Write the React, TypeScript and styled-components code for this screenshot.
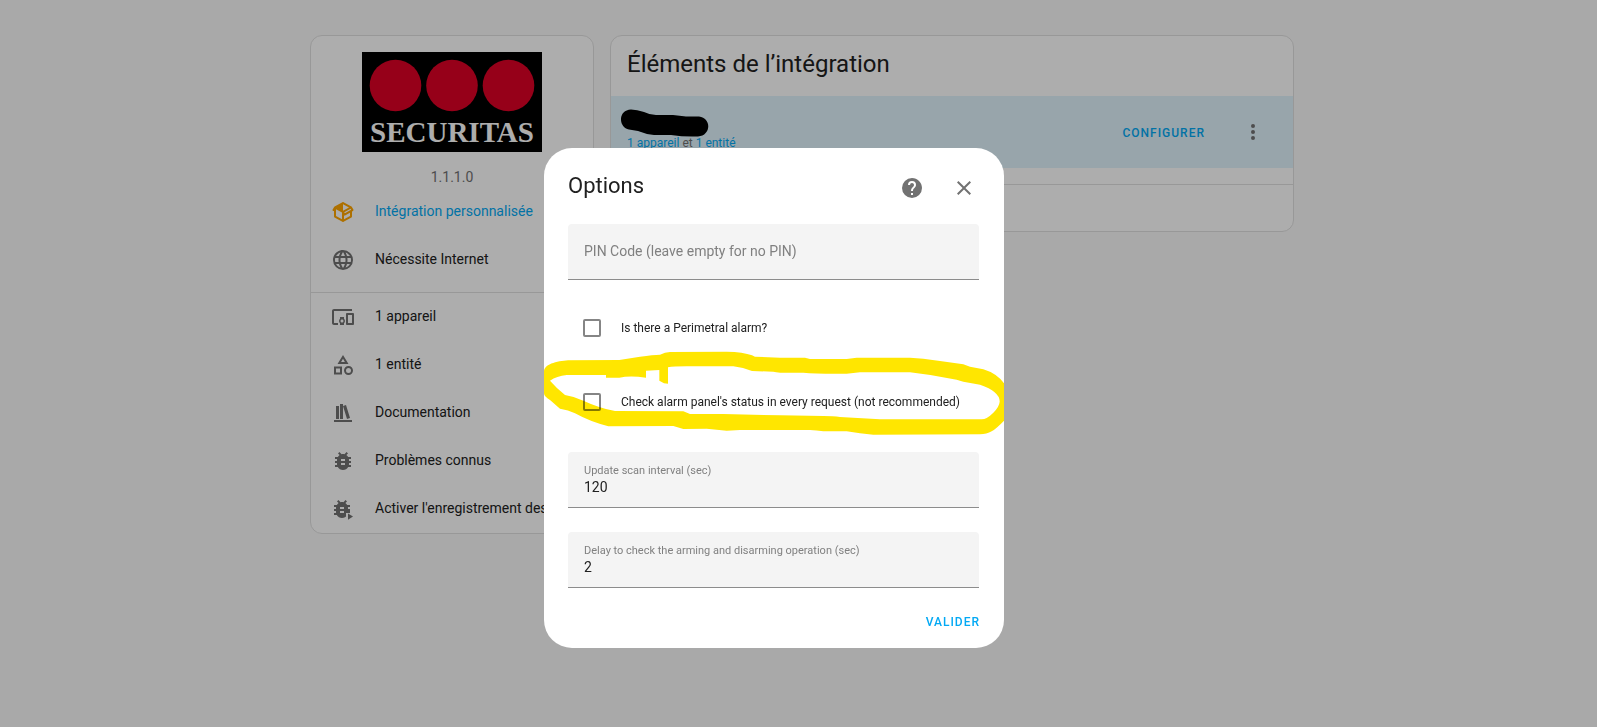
import React from "react";
import styled, { createGlobalStyle } from "styled-components";

const GlobalStyle = createGlobalStyle`
  *, *::before, *::after { box-sizing: border-box; }
  body {
    margin: 0;
    background: #fafafa;
    color: #212121;
    font: 400 14px/20px Roboto, sans-serif;
  }
  h1, h2, p, ul { margin: 0; padding: 0; font-weight: 400; }
  a { color: #03a9f4; text-decoration: none; }
  button { font: inherit; border: 0; background: none; cursor: pointer; }
`;

const icons = {
  package:
    "M2,10.96C1.5,10.68 1.35,10.07 1.63,9.59L3.13,7C3.24,6.8 3.41,6.66 3.6,6.58L11.43,2.18C11.59,2.06 11.79,2 12,2C12.21,2 12.41,2.06 12.57,2.18L20.47,6.62C20.66,6.72 20.82,6.88 20.91,7.08L22.36,9.6C22.64,10.08 22.47,10.69 22,10.96L21,11.54V16.5C21,16.88 20.79,17.21 20.47,17.38L12.57,21.82C12.41,21.94 12.21,22 12,22C11.79,22 11.59,21.94 11.43,21.82L3.53,17.38C3.21,17.21 3,16.88 3,16.5V10.96C2.7,11.13 2.32,11.14 2,10.96M12,4.15V4.15L12,10.85V10.85L17.96,7.5L12,4.15M5,15.91L11,19.29V12.58L5,9.21V15.91M19,15.91V12.69L14,15.59C13.67,15.77 13.3,15.76 13,15.6V19.29L19,15.91M13.85,13.36L20.13,9.73L19.55,8.72L13.27,12.35L13.85,13.36Z",
  web: "M16.36,14C16.44,13.34 16.5,12.68 16.5,12C16.5,11.32 16.44,10.66 16.36,10H19.74C19.9,10.64 20,11.31 20,12C20,12.69 19.9,13.36 19.74,14M14.59,19.56C15.19,18.45 15.65,17.25 15.97,16H18.92C17.96,17.65 16.43,18.93 14.59,19.56M14.34,14H9.66C9.56,13.34 9.5,12.68 9.5,12C9.5,11.32 9.56,10.65 9.66,10H14.34C14.43,10.65 14.5,11.32 14.5,12C14.5,12.68 14.43,13.34 14.34,14M12,19.96C11.17,18.76 10.5,17.43 10.09,16H13.91C13.5,17.43 12.83,18.76 12,19.96M8,8H5.08C6.03,6.34 7.57,5.06 9.4,4.44C8.8,5.55 8.35,6.75 8,8M5.08,16H8C8.35,17.25 8.8,18.45 9.4,19.56C7.57,18.93 6.03,17.65 5.08,16M4.26,14C4.1,13.36 4,12.69 4,12C4,11.31 4.1,10.64 4.26,10H7.64C7.56,10.66 7.5,11.32 7.5,12C7.5,12.68 7.56,13.34 7.64,14M12,4.03C12.83,5.23 13.5,6.57 13.91,8H10.09C10.5,6.57 11.17,5.23 12,4.03M18.92,8H15.97C15.65,6.75 15.19,5.55 14.59,4.44C16.43,5.07 17.96,6.34 18.92,8M12,2C6.47,2 2,6.5 2,12A10,10 0 0,0 12,22A10,10 0 0,0 22,12A10,10 0 0,0 12,2Z",
  devices:
    "M3 6H21V4H3C1.9 4 1 4.9 1 6V18C1 19.1 1.9 20 3 20H7V18H3V6M13 12H9V13.78C8.39 14.33 8 15.11 8 16C8 16.89 8.39 17.67 9 18.22V20H13V18.22C13.61 17.67 14 16.88 14 16S13.61 14.33 13 13.78V12M11 17.5C10.17 17.5 9.5 16.83 9.5 16S10.17 14.5 11 14.5 12.5 15.17 12.5 16 11.83 17.5 11 17.5M22 8H16C15.5 8 15 8.5 15 9V19C15 19.5 15.5 20 16 20H22C22.5 20 23 19.5 23 19V9C23 8.5 22.5 8 22 8M21 18H17V10H21V18Z",
  shape:
    "M11,13.5V21.5H3V13.5H11M9,15.5H5V19.5H9V15.5M12,2L17.5,11H6.5L12,2M12,5.86L10.08,9H13.92L12,5.86M17.5,13C20,13 22,15 22,17.5C22,20 20,22 17.5,22C15,22 13,20 13,17.5C13,15 15,13 17.5,13M17.5,15A2.5,2.5 0 0,0 15,17.5A2.5,2.5 0 0,0 17.5,20A2.5,2.5 0 0,0 20,17.5A2.5,2.5 0 0,0 17.5,15Z",
  bookshelf: "M9 3V18H12V3H9M12 5L16 18L19 17L15 4L12 5M5 5V18H8V5H5M3 19V21H21V19H3Z",
  bug: "M14,12H10V10H14M14,16H10V14H14M20,8H17.19C16.74,7.22 16.12,6.55 15.37,6.04L17,4.41L15.59,3L13.42,5.17C12.96,5.06 12.5,5 12,5C11.5,5 11.04,5.06 10.59,5.17L8.41,3L7,4.41L8.62,6.04C7.88,6.55 7.26,7.22 6.81,8H4V10H6.09C6.04,10.33 6,10.66 6,11V12H4V14H6V15C6,15.34 6.04,15.67 6.09,16H4V18H6.81C7.85,19.79 9.78,21 12,21C14.22,21 16.15,19.79 17.19,18H20V16H17.91C17.96,15.67 18,15.34 18,15V14H20V12H18V11C18,10.66 17.96,10.33 17.91,10H20V8Z",
  dots: "M12,16A2,2 0 0,1 14,18A2,2 0 0,1 12,20A2,2 0 0,1 10,18A2,2 0 0,1 12,16M12,10A2,2 0 0,1 14,12A2,2 0 0,1 12,14A2,2 0 0,1 10,12A2,2 0 0,1 12,10M12,4A2,2 0 0,1 14,6A2,2 0 0,1 12,8A2,2 0 0,1 10,6A2,2 0 0,1 12,4Z",
  help: "M15.07,11.25L14.17,12.17C13.45,12.89 13,13.5 13,15H11V14.5C11,13.39 11.45,12.39 12.17,11.67L13.41,10.41C13.78,10.05 14,9.55 14,9C14,7.89 13.1,7 12,7A2,2 0 0,0 10,9H8A4,4 0 0,1 12,5A4,4 0 0,1 16,9C16,9.88 15.64,10.67 15.07,11.25M13,19H11V17H13M12,2A10,10 0 0,0 2,12A10,10 0 0,0 12,22A10,10 0 0,0 22,12C22,6.47 17.5,2 12,2Z",
  close:
    "M19,6.41L17.59,5L12,10.59L6.41,5L5,6.41L10.59,12L5,17.59L6.41,19L12,13.41L17.59,19L19,17.59L13.41,12L19,6.41Z",
};

const Svg = styled.svg<{ $color?: string }>`
  display: block;
  flex: none;
  width: 24px;
  height: 24px;
  fill: ${(p) => p.$color ?? "#727272"};
`;

const Icon = ({ name, color }: { name: keyof typeof icons; color?: string }) => (
  <Svg viewBox="0 0 24 24" $color={color} aria-hidden="true">
    <path d={icons[name]} />
  </Svg>
);

const BugPlayIcon = () => (
  <Svg viewBox="0 0 24 24" aria-hidden="true">
    <path d={icons.bug} transform="translate(-1 0)" />
    <path d="M15 14V24H24V14Z" fill="#fff" />
    <path d="M15 14H19V16H15Z" />
    <path d="M17 16.5V22.8L22 19.6Z" />
  </Svg>
);

const Page = styled.main`
  display: flex;
  align-items: flex-start;
  gap: 16px;
  max-width: 984px;
  margin: 0 auto;
  padding: 35px 0;
`;

const PageFrame = styled.div`
  padding-left: 7px;
`;

const Card = styled.section<{ $grow?: boolean }>`
  flex: ${(p) => (p.$grow ? "1" : "0 0 284px")};
  min-width: 0;
  overflow: hidden;
  background: #fff;
  border: 1px solid #e0e0e0;
  border-radius: 12px;
`;

const Brand = styled.div`
  display: flex;
  flex-direction: column;
  align-items: center;
  gap: 15px;
  padding: 16px 0 1px;
  color: #727272;
`;

const Logo = styled.svg`
  display: block;
  width: 180px;
  height: 100px;
`;

const InfoList = styled.ul<{ $divided?: boolean }>`
  list-style: none;
  padding: ${(p) => (p.$divided ? "0 0 8px" : "0")};
  border-bottom: ${(p) => (p.$divided ? "1px solid #e0e0e0" : "0")};
`;

const InfoItem = styled.li`
  display: flex;
  align-items: center;
  gap: 20px;
  height: 48px;
  padding: 0 20px;
  white-space: nowrap;
`;

const InfoLink = styled.a<{ $plain?: boolean }>`
  padding-bottom: 2px;
  color: ${(p) => (p.$plain ? "#212121" : "#03a9f4")};
`;

const InfoText = styled.span`
  padding-bottom: 2px;
`;

const CardTitle = styled.h1`
  padding: 12px 16px 16px;
  font-size: 24px;
  line-height: 32px;
`;

const Entry = styled.div`
  display: flex;
  align-items: center;
  height: 72px;
  padding: 0 16px;
  background: #e0f3fc;
`;

const EntryText = styled.div`
  flex: 1;
  padding-top: 2px;
  font-size: 12px;
  color: #727272;
`;

const EntryName = styled.div`
  position: relative;
  height: 20px;
`;

const Redaction = styled.svg`
  position: absolute;
  left: -6px;
  top: -4px;
  width: 88px;
  height: 28px;
`;

const TextButton = styled.button`
  padding: 9px 8px 7px;
  font-size: 12px;
  line-height: 20px;
  font-weight: 500;
  letter-spacing: 1px;
  text-transform: uppercase;
  color: #03a9f4;
`;

const IconButton = styled.button`
  display: grid;
  place-items: center;
  width: 48px;
  height: 48px;
  padding: 0;
`;

const EntryActions = styled.div`
  display: flex;
  align-items: center;
  gap: 16px;
`;

const CardFooter = styled.div`
  height: 47px;
  margin-top: 16px;
  border-top: 1px solid #e0e0e0;
`;

const Scrim = styled.div`
  position: fixed;
  inset: 0;
  display: flex;
  align-items: center;
  justify-content: center;
  padding: 69px 49px 0 0;
  background: rgba(0, 0, 0, 0.32);
`;

const Dialog = styled.form`
  position: relative;
  width: 460px;
  max-width: 100%;
  background: #fff;
  border-radius: 28px;
`;

const DialogHeader = styled.header`
  display: flex;
  gap: 4px;
  padding: 16px 16px 12px 24px;
`;

const DialogTitle = styled.h2`
  flex: 1;
  font-size: 22px;
  line-height: 44px;
`;

const Fields = styled.div`
  display: flex;
  flex-direction: column;
  gap: 24px;
  padding: 0 25px 0 24px;
`;

const FieldBox = styled.div`
  display: flex;
  flex-direction: column;
  justify-content: center;
  height: 56px;
  padding: 0 16px 2px;
  background: #f4f4f4;
  border-bottom: 1px solid #8c8c8c;
  border-radius: 4px 4px 0 0;
`;

const FieldLabel = styled.label`
  font-size: 11px;
  line-height: 16px;
  color: #808080;
`;

const FieldInput = styled.input`
  width: 100%;
  height: 16px;
  padding: 0;
  border: 0;
  outline: 0;
  background: none;
  color: #212121;
  font: 400 14px/16px Roboto, sans-serif;

  &::placeholder {
    color: #808080;
    opacity: 1;
  }
`;

const CheckRow = styled.label`
  display: flex;
  align-items: center;
  gap: 20px;
  height: 50px;
  padding: 0 0 2px 15px;
  font-size: 12px;
  white-space: nowrap;
`;

const CheckInput = styled.input`
  appearance: none;
  flex: none;
  width: 18px;
  height: 18px;
  margin: 0;
  border: 2px solid #858585;
  border-radius: 2px;

  &:checked {
    background: #03a9f4;
  }
`;

const DialogActions = styled.footer`
  display: flex;
  justify-content: flex-end;
  padding: 15px 16px 9px;
`;

const Marker = styled.svg`
  position: absolute;
  left: 0;
  top: 202px;
  width: 100%;
  height: 90px;
  mix-blend-mode: multiply;
  pointer-events: none;
`;

const TextField = ({ id, label, value }: { id: string; label: string; value: string }) => (
  <FieldBox>
    <FieldLabel htmlFor={id}>{label}</FieldLabel>
    <FieldInput id={id} defaultValue={value} />
  </FieldBox>
);

export default function App() {
  return (
    <>
      <GlobalStyle />
      <PageFrame>
        <Page>
          <Card>
            <Brand>
              <Logo viewBox="0 0 180 100" role="img" aria-label="Securitas">
                <rect width="180" height="100" fill="#000" />
                <g fill="#de0026">
                  <circle cx="33.5" cy="33.5" r="25.8" />
                  <circle cx="90" cy="33.5" r="25.8" />
                  <circle cx="146.5" cy="33.5" r="25.8" />
                </g>
                <text
                  x="90"
                  y="90"
                  textAnchor="middle"
                  fill="#fff"
                  fontFamily="'Liberation Serif', serif"
                  fontWeight="700"
                  fontSize="29"
                >
                  SECURITAS
                </text>
              </Logo>
              <p>1.1.1.0</p>
            </Brand>
            <InfoList $divided>
              <InfoItem>
                <Icon name="package" color="#ffa600" />
                <InfoLink href="#">Intégration personnalisée</InfoLink>
              </InfoItem>
              <InfoItem>
                <Icon name="web" />
                <InfoText>Nécessite Internet</InfoText>
              </InfoItem>
            </InfoList>
            <InfoList>
              <InfoItem>
                <Icon name="devices" />
                <InfoLink href="#" $plain>1 appareil</InfoLink>
              </InfoItem>
              <InfoItem>
                <Icon name="shape" />
                <InfoLink href="#" $plain>1 entité</InfoLink>
              </InfoItem>
              <InfoItem>
                <Icon name="bookshelf" />
                <InfoLink href="#" $plain>Documentation</InfoLink>
              </InfoItem>
              <InfoItem>
                <Icon name="bug" />
                <InfoLink href="#" $plain>Problèmes connus</InfoLink>
              </InfoItem>
              <InfoItem>
                <BugPlayIcon />
                <InfoLink href="#" $plain>Activer l'enregistrement des</InfoLink>
              </InfoItem>
            </InfoList>
          </Card>

          <Card $grow>
            <CardTitle>Éléments de l’intégration</CardTitle>
            <Entry>
              <EntryText>
                <EntryName>
                  <Redaction viewBox="0 0 88 28" aria-hidden="true">
                    <path d="M10 .5Q16 .5 23 3Q29 6 35 6L52 6L65 7.5L78 7.5C91 9 90 27 77 27.5Q63 28 50 26L33 26Q24 25 17 22L8 20.5C-3 18-3 1 10 .5Z" />
                  </Redaction>
                </EntryName>
                <div>
                  <a href="#">1 appareil</a> et <a href="#">1 entité</a>
                </div>
              </EntryText>
              <EntryActions>
                <TextButton type="button">Configurer</TextButton>
                <IconButton type="button" aria-label="Menu">
                  <Icon name="dots" />
                </IconButton>
              </EntryActions>
            </Entry>
            <CardFooter />
          </Card>
        </Page>
      </PageFrame>

      <Scrim>
        <Dialog role="dialog" aria-labelledby="dialog-title" onSubmit={(e) => e.preventDefault()}>
          <DialogHeader>
            <DialogTitle id="dialog-title">Options</DialogTitle>
            <IconButton type="button" aria-label="Aide">
              <Icon name="help" />
            </IconButton>
            <IconButton type="button" aria-label="Fermer">
              <Icon name="close" />
            </IconButton>
          </DialogHeader>
          <Fields>
            <FieldBox>
              <FieldInput
                aria-label="PIN Code (leave empty for no PIN)"
                placeholder="PIN Code (leave empty for no PIN)"
              />
            </FieldBox>
            <CheckRow>
              <CheckInput type="checkbox" />
              Is there a Perimetral alarm?
            </CheckRow>
            <CheckRow>
              <CheckInput type="checkbox" />
              Check alarm panel's status in every request (not recommended)
            </CheckRow>
            <TextField id="scan" label="Update scan interval (sec)" value="120" />
            <TextField id="delay" label="Delay to check the arming and disarming operation (sec)" value="2" />
          </Fields>
          <DialogActions>
            <TextButton type="submit">Valider</TextButton>
          </DialogActions>
          <Marker viewBox="12 60 1380 270" aria-hidden="true">
            <path
              fill="#ffe600"
              fillRule="evenodd"
              d="M12 125C12 100 60 92 90 91L238 90L300 80Q340 74 360 74Q375 66 390 66L560 65Q610 66 636 76L645 80L720 83L795 83L810 87L920 87L950 83L1110 83L1150 86L1200 93L1270 103L1290 110L1330 118Q1370 130 1392 160L1392 272Q1370 295 1355 304Q1340 313 1320 313L1000 314Q960 311 920 304L850 304Q830 301 810 300L600 300L560 302L500 296L430 297L400 288L205 289Q150 275 105 250Q85 240 60 236L30 210Q12 200 12 190ZM30 152Q50 138 80 135L198 135L198 143L238 143Q270 136 318 143L318 122L358 120L358 152L372 160L384 161L384 112Q400 109 440 109L580 109Q610 112 636 123L700 125Q720 130 790 128Q830 132 920 131L960 127L1110 127Q1180 135 1250 149L1270 155L1320 164Q1380 185 1379 215Q1378 230 1360 248Q1340 268 1325 268L1020 268L900 261Q880 258 850 258L720 256L550 252L450 252L430 244L225 243Q180 235 130 212Q105 200 75 195Q50 175 30 152Z"
            />
          </Marker>
        </Dialog>
      </Scrim>
    </>
  );
}
